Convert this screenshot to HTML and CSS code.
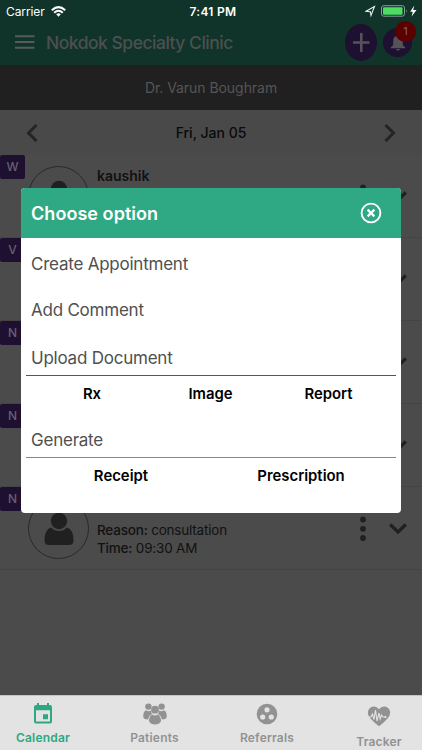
FILE: index.html
```html
<!DOCTYPE html>
<html lang="en">
<head>
<meta charset="utf-8">
<title>Nokdok Specialty Clinic</title>
<link rel="stylesheet" href="styles.css">
</head>
<body>
<svg class="defs" width="0" height="0">
  <symbol id="person" viewBox="0 0 30 34"><circle cx="15" cy="9" r="8.2"/><path d="M7 15.500Q10.500 19 15 19T23 15.500Q29.500 17.500 29.500 28.500Q29.500 33 25 33H5Q.5 33 .5 28.500Q.5 17.500 7 15.500Z"/></symbol>
  <symbol id="dots" viewBox="0 0 6 26"><circle cx="3" cy="3.500" r="2.900"/><circle cx="3" cy="12.800" r="2.900"/><circle cx="3" cy="22" r="2.900"/></symbol>
  <symbol id="chevron" viewBox="0 0 18 12"><path d="M1.200 1.500 9 9 16.800 1.500" fill="none" stroke="#202020" stroke-width="3.200"/></symbol>
</svg>
<div class="screen">
  <header class="header">
    <div class="status">
      <span class="carrier">Carrier</span>
      <svg class="wifi" width="15" height="11" viewBox="0 0 15 11" fill="none" stroke="#fff" stroke-width="2"><path d="M.8 4.300Q7.500-2 14.200 4.300M3.200 6.800Q7.500 2.800 11.800 6.800"/><path d="M5.200 8.300Q7.500 6.300 9.800 8.300L7.500 10.700Z" fill="#fff" stroke="none"/></svg>
      <span class="clock">7:41 PM</span>
      <svg class="power" width="54" height="14" viewBox="0 0 54 14"><path d="M1 7.200 9.500 2.500 6 11.500 5.300 7.700Z" fill="none" stroke="#e8eeec" stroke-width="1.100"/><rect x="16.500" y="1.700" width="23" height="10.500" rx="2.300" fill="none" stroke="#8b9d98"/><rect x="18" y="3.200" width="19.500" height="7.500" rx="1" fill="#4cdc64"/><path d="M41 5.300Q42.600 7 41 8.700Z" fill="#8b9d98"/><path d="M49.300 1.500 45.200 7.800H47.800L46.600 12.500 51.500 6H48.200Z" fill="#fff"/></svg>
    </div>
    <div class="toolbar">
      <svg class="menu" width="20" height="14" viewBox="0 0 20 14"><path d="M0 1.200H19.500M0 7H19.500M0 12.800H19.500" stroke="#545b59" stroke-width="2"/></svg>
      <h1 class="title">Nokdok Specialty Clinic</h1>
      <span class="add"><svg width="17" height="19" viewBox="0 0 17 19"><path d="M0 9.500H16.500M8.300 0V19" stroke="#55535a" stroke-width="2.600"/></svg></span>
      <span class="alerts"><svg width="16" height="18" viewBox="0 0 16 18" fill="#555359"><path d="M8 1Q9.200 1 9.300 2.700Q12.800 3.700 12.800 8V12L15.300 14.500V15.200H.7V14.500L3.200 12V8Q3.200 3.700 6.700 2.700Q6.800 1 8 1ZM6 16H10Q9.700 17.600 8 17.600T6 16Z"/></svg><b class="count">1</b></span>
    </div>
  </header>
  <div class="doctor">Dr. Varun Boughram</div>
  <nav class="date">
    <svg width="12" height="18" viewBox="0 0 12 18"><path d="M10.500 1 2.500 9 10.500 17" fill="none" stroke="#242424" stroke-width="3"/></svg>
    <span>Fri, Jan 05</span>
    <svg width="12" height="18" viewBox="0 0 12 18"><path d="M1.500 1 9.500 9 1.500 17" fill="none" stroke="#242424" stroke-width="3"/></svg>
  </nav>
  <main class="list">
    <article class="row"><span class="tag">W</span><span class="avatar"><svg width="30" height="34"><use href="#person"/></svg></span><div class="info"><b class="name">kaushik</b></div><svg class="dots" width="6" height="26"><use href="#dots"/></svg><svg class="more" width="18" height="12"><use href="#chevron"/></svg></article>
    <article class="row"><span class="tag">V</span><span class="avatar"></span><div class="info"></div><svg class="dots" width="6" height="26"><use href="#dots"/></svg><svg class="more" width="18" height="12"><use href="#chevron"/></svg></article>
    <article class="row"><span class="tag">N</span><span class="avatar"></span><div class="info"></div><svg class="dots" width="6" height="26"><use href="#dots"/></svg><svg class="more" width="18" height="12"><use href="#chevron"/></svg></article>
    <article class="row"><span class="tag">N</span><span class="avatar"></span><div class="info"></div><svg class="dots" width="6" height="26"><use href="#dots"/></svg><svg class="more" width="18" height="12"><use href="#chevron"/></svg></article>
    <article class="row"><span class="tag">N</span><span class="avatar"><svg width="30" height="34"><use href="#person"/></svg></span><div class="info last"><p><b>Reason:</b> consultation</p><p><b>Time:</b> 09:30 AM</p></div><svg class="dots" width="6" height="26"><use href="#dots"/></svg><svg class="more" width="18" height="12"><use href="#chevron"/></svg></article>
  </main>
  <footer class="tabs">
    <div class="tab active"><svg width="18" height="21" viewBox="0 0 18 21"><path fill-rule="evenodd" d="M3 0H5V2H13V0H15V2H16Q18 2 18 4V18.500Q18 20.500 16 20.500H2Q0 20.500 0 18.500V4Q0 2 2 2H3ZM2 7.200V18.500H16V7.200ZM9 11.200H14V16.200H9Z"/></svg><span>Calendar</span></div>
    <div class="tab patients"><svg width="24" height="22" viewBox="0 0 24 22" fill="#929292"><circle cx="5.400" cy="3.600" r="3.200"/><circle cx="18.600" cy="3.600" r="3.200"/><path d="M3 7.200Q5.500 9 8 7.500Q8 10 9.200 11Q5.500 12.500 5.200 16.500Q0 16.500 .2 13Q.4 8.500 3 7.200ZM21 7.200Q18.500 9 16 7.500Q16 10 14.800 11Q18.500 12.500 18.800 16.500Q24 16.500 23.800 13Q23.600 8.500 21 7.200Z"/><circle cx="12" cy="6.700" r="3.900"/><path d="M9.200 11.500Q12 13.500 14.800 11.500Q18 13 18 18.300Q16 21.500 12 21.500T6 18.300Q6 13 9.200 11.500Z"/></svg><span>Patients</span></div>
    <div class="tab referrals"><svg width="22" height="22" viewBox="0 0 22 22"><circle cx="11" cy="11" r="10.300" fill="#929292"/><g fill="#e3e3e3"><circle cx="11" cy="6.800" r="2.600"/><circle cx="6.700" cy="14" r="2.600"/><circle cx="15.300" cy="14" r="2.600"/></g></svg><span>Referrals</span></div>
    <div class="tab tracker"><svg width="24" height="21" viewBox="0 0 24 21"><path d="M12 20.300Q8 17.500 3.500 12.500Q-.5 8 1.500 4Q3 .5 7 .5Q10 .5 12 3.300Q14 .5 17 .5Q21 .5 22.500 4Q24.500 8 20.500 12.500Q16 17.500 12 20.300Z" fill="#929292"/><path d="M1 11H4L5.500 8 7 13.500 8.500 4 10 15 12 7 13.200 13 14.500 9 16 11H19" fill="none" stroke="#e3e3e3" stroke-width="1.100"/><circle cx="18.500" cy="11" r="1.100" fill="#e3e3e3"/></svg><span>Tracker</span></div>
  </footer>
  <section class="dialog">
    <header class="dialog-head"><h2>Choose option</h2><svg width="22" height="22" viewBox="0 0 22 22" fill="none" stroke="#fff"><circle cx="11" cy="11" r="9.400" stroke-width="1.900"/><path d="M7.600 7.600 14.400 14.400M14.400 7.600 7.600 14.400" stroke-width="2.200"/></svg></header>
    <div class="option create">Create Appointment</div>
    <div class="option comment">Add Comment</div>
    <div class="option upload">Upload Document</div>
    <div class="choices three"><span>Rx</span><span>Image</span><span>Report</span></div>
    <div class="option generate">Generate</div>
    <div class="choices two"><span>Receipt</span><span>Prescription</span></div>
  </section>
</div>
</body>
</html>
```
FILE: styles.css
```css
* { box-sizing: border-box; margin: 0; padding: 0; }
body { font-family: Inter, "Liberation Sans", sans-serif; overflow: hidden; }
svg { display: block; flex: none; }
.defs { position: absolute; }
span, b, h1, h2, p, .option { white-space: nowrap; }
.screen { position: relative; width: 422px; height: 750px; background: #4b4b4b; display: flex; flex-direction: column; }
.header { height: 65px; background: #10332a; }
.status { height: 22px; display: grid; grid-template-columns: 51px 100px 124px 90px 57px; align-items: center; color: #fff; }
.carrier { padding-left: 6px; font-size: 12px; letter-spacing: -.1px; }
.clock { font-size: 12px; font-weight: 600; text-align: center; letter-spacing: .3px; }
.status .power { grid-column: 5; }
.status .clock { grid-column: 3; }
.toolbar { height: 43px; display: flex; align-items: center; padding-left: 15px; }
.menu { margin-top: -3px; }
.title { flex: none; width: 310px; padding-left: 11px; margin-top: -2px; font-size: 17.500px; font-weight: 500; letter-spacing: -.5px; color: #4c504f; }
.add { flex: none; width: 32px; height: 37px; margin-top: -2px; border-radius: 50%; background: #1d1030; display: grid; place-items: center; }
.alerts { flex: none; position: relative; width: 29px; height: 29px; margin: -3px 0 0 6px; border-radius: 50%; background: #1d1030; display: grid; place-items: center; }
.count { position: absolute; left: 12px; top: -7px; width: 21px; height: 21px; border-radius: 50%; background: #5b0000; color: #8a6060; font-size: 11px; font-weight: 400; line-height: 21px; text-align: center; }
.doctor { height: 45px; line-height: 45px; text-align: center; background: #202020; color: #555; font-size: 14px; letter-spacing: -.05px; }
.date { height: 45px; padding: 0 26px; display: flex; align-items: center; justify-content: space-between; background: #494949; color: #0a0a0a; font-size: 14px; font-weight: 500; }
.list { flex: 1; }
.row { height: 83px; display: flex; border-bottom: 1px solid #444; }
.tag { width: 25px; height: 24px; border-radius: 2px; background: #1d1030; color: #666070; font-size: 12px; font-weight: 500; line-height: 24px; text-align: center; }
.avatar { width: 61px; height: 61px; margin: 11px 0 0 3px; border: 1px solid #292929; border-radius: 50%; display: grid; place-items: center; fill: #202020; }
.info { width: 263px; padding: 12px 0 0 8px; font-size: 13.500px; line-height: 18px; letter-spacing: -.2px; color: #111; }
.name { display: block; font-size: 14px; font-weight: 600; letter-spacing: 0; }
.info.last { padding-top: 34px; }
.info.last b { font-weight: 500; }
.dots { margin: 29px 0 0 8px; fill: #202020; }
.more { margin: 36px 0 0 23px; }
.tabs { height: 55px; background: #e3e3e3; border-top: 1px solid #c4c4c4; display: flex; }
.tab { padding-top: 7px; display: flex; flex: none; flex-direction: column; align-items: center; color: #929292; font-size: 12px; font-weight: 600; line-height: 15px; letter-spacing: .2px; }
.tab span { margin-top: 5px; }
.active { width: 86px; color: #2ea783; fill: #2ea783; }
.active span { margin-top: 6px; }
.patients { width: 137px; }
.referrals { width: 88px; }
.tracker { width: 86px; margin-left: 25px; padding-top: 10px; }
.tracker span { margin-top: 7px; }
.dialog { position: absolute; left: 21px; top: 188px; width: 380px; height: 325px; border-radius: 4px; overflow: hidden; background: #fff; color: #505050; }
.dialog-head { height: 50px; padding: 0 19px 0 10px; display: flex; align-items: center; justify-content: space-between; background: #2fa884; color: #fff; }
.dialog-head h2 { font-size: 18px; font-weight: 600; letter-spacing: .05px; }
.option { height: 46px; margin: 0 5px; padding-left: 5px; line-height: 53px; font-size: 17px; letter-spacing: -.23px; }
.upload { line-height: 56px; border-bottom: 1px solid #555; }
.choices { display: grid; color: #000; font-size: 14.900px; font-weight: 600; text-align: center; height: 36px; line-height: 36px; }
.three { grid-template-columns: 142px 95px 141px; }
.generate { line-height: 56px; border-bottom: 1px solid #888; }
.two { grid-template-columns: 200px 160px; }
```
